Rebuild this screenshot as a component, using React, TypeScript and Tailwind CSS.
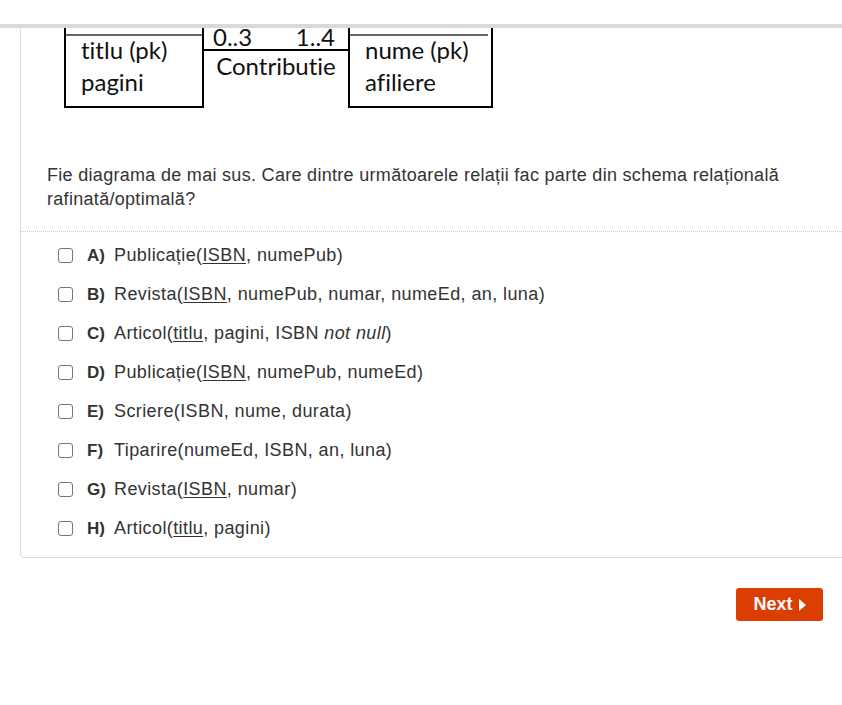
import React from 'react';

type Option = { key: string; body: React.ReactNode };

const U = ({ children }: { children: React.ReactNode }) => (
  <span className="underline underline-offset-2">{children}</span>
);

const options: Option[] = [
  { key: 'A)', body: <>Publicație(<U>ISBN</U>, numePub)</> },
  { key: 'B)', body: <>Revista(<U>ISBN</U>, numePub, numar, numeEd, an, luna)</> },
  { key: 'C)', body: <>Articol(<U>titlu</U>, pagini, ISBN <i>not null</i>)</> },
  { key: 'D)', body: <>Publicație(<U>ISBN</U>, numePub, numeEd)</> },
  { key: 'E)', body: <>Scriere(ISBN, nume, durata)</> },
  { key: 'F)', body: <>Tiparire(numeEd, ISBN, an, luna)</> },
  { key: 'G)', body: <>Revista(<U>ISBN</U>, numar)</> },
  { key: 'H)', body: <>Articol(<U>titlu</U>, pagini)</> },
];

function Diagram() {
  // ER diagram picture, cropped at the top like the original image
  return (
    <div className="relative ml-[43px] h-[80px] w-[430px] font-['Lato',sans-serif] text-[24px] leading-[32px] text-[#111] [font-variant-ligatures:none]">
      <div className="absolute left-0 top-0 h-[80px] w-[140px] border-x-2 border-b-2 border-black">
        <div className="mt-[6px] h-[2px] bg-[#666]" />
        <div className="absolute left-[15px] top-[6px]">
          <div>titlu (pk)</div>
          <div>pagini</div>
        </div>
      </div>
      <div className="absolute left-[140px] top-0 w-[144px]">
        <div className="relative h-[21px] leading-[18px]">
          <span className="absolute left-[9px] top-0">0..3</span>
          <span className="absolute right-[13px] top-0">1..4</span>
        </div>
        <div className="h-[2px] bg-black" />
        <div className="text-center leading-[30px]">Contributie</div>
      </div>
      <div className="absolute left-[284px] top-0 h-[80px] w-[145px] border-x-2 border-b-2 border-black">
        <div className="mr-[3px] mt-[6px] h-[2px] bg-[#666]" />
        <div className="absolute left-[15px] top-[6px]">
          <div>nume (pk)</div>
          <div>afiliere</div>
        </div>
      </div>
    </div>
  );
}

export default function App() {
  return (
    <div className="w-[842px] h-[705px] overflow-hidden bg-white font-['Liberation_Sans',Arial,sans-serif] text-[#333]">
      <div className="h-[24px]" />
      <div className="h-[4px] bg-[#d9d9d9]" />
      <div className="ml-[20px] mr-[-20px] rounded-bl-[4px] border-b border-l border-[#dcdcdc]">
        <Diagram />
        <div className="border-b border-dotted border-[#c8c8c8] pb-[20px] pl-[26px] pr-[40px] pt-[55px]">
          <p className="text-[18px] leading-[24px] tracking-[0.3px]">
            Fie diagrama de mai sus. Care dintre următoarele relații fac parte din schema relațională rafinată/optimală?
          </p>
        </div>
        <ul className="pb-[9px] pl-[37px] pt-[4px]">
          {options.map((o) => (
            <li key={o.key} className="flex h-[39px] items-center text-[18px]">
              <span className="h-[15px] w-[15px] shrink-0 rounded-[3px] border border-[#767676] bg-white" />
              <span className="ml-[14px] w-[27px] shrink-0 text-[17px] font-bold">{o.key}</span>
              <span className="tracking-[0.4px]">{o.body}</span>
            </li>
          ))}
        </ul>
      </div>
      <div className="flex justify-end pr-[19px] pt-[30px]">
        <button className="flex h-[33px] w-[87px] items-center justify-center gap-[6px] rounded-[3px] bg-[#dc3d00] text-[18px] font-bold text-white">
          Next
          <svg width="7" height="12" viewBox="0 0 7 12" className="mt-[1px]">
            <path d="M0 0 L7 6 L0 12 Z" fill="white" />
          </svg>
        </button>
      </div>
    </div>
  );
}
